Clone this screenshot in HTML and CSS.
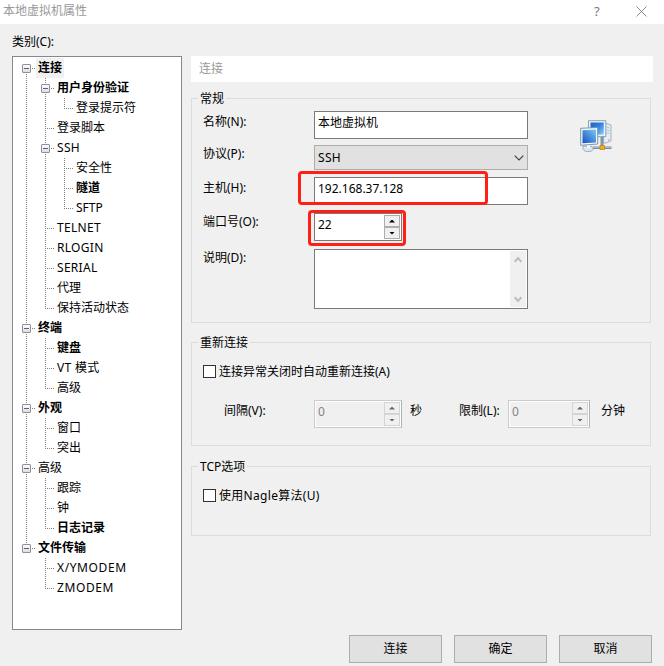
FILE: index.html
```html
<!DOCTYPE html>
<html lang="zh-CN">
<head>
<meta charset="utf-8">
<title>本地虚拟机属性</title>
<link rel="stylesheet" href="styles.css">
</head>
<body>
<div class="dialog">
  <header class="titlebar">
    <span class="title">本地虚拟机属性</span>
    <span class="help">?</span>
    <svg class="close" width="11" height="11" viewBox="0 0 11 11"><path d="M.5 .5l10 10M10.5 .5l-10 10" stroke="#8c8c8c" fill="none"/></svg>
  </header>
  <div class="category">类别(C):</div>
  <main class="content">
    <nav class="tree">
      <ul>
        <li><div class="row"><i class="branch"><b class="toggle"></b></i><span class="bold selected">连接</span></div>
          <ul>
            <li><div class="row"><i class="branch"><b class="toggle"></b></i><span class="bold">用户身份验证</span></div>
              <ul>
                <li><div class="row"><i class="branch"></i><span>登录提示符</span></div></li>
              </ul>
            </li>
            <li><div class="row"><i class="branch"></i><span>登录脚本</span></div></li>
            <li><div class="row"><i class="branch"><b class="toggle"></b></i><span class="latin">SSH</span></div>
              <ul>
                <li><div class="row"><i class="branch"></i><span>安全性</span></div></li>
                <li><div class="row"><i class="branch"></i><span class="bold">隧道</span></div></li>
                <li><div class="row"><i class="branch"></i><span>SFTP</span></div></li>
              </ul>
            </li>
            <li><div class="row"><i class="branch"></i><span class="latin">TELNET</span></div></li>
            <li><div class="row"><i class="branch"></i><span class="latin">RLOGIN</span></div></li>
            <li><div class="row"><i class="branch"></i><span class="latin">SERIAL</span></div></li>
            <li><div class="row"><i class="branch"></i><span>代理</span></div></li>
            <li><div class="row"><i class="branch"></i><span>保持活动状态</span></div></li>
          </ul>
        </li>
        <li><div class="row"><i class="branch"><b class="toggle"></b></i><span class="bold">终端</span></div>
          <ul>
            <li><div class="row"><i class="branch"></i><span class="bold">键盘</span></div></li>
            <li><div class="row"><i class="branch"></i><span class="latin">VT 模式</span></div></li>
            <li><div class="row"><i class="branch"></i><span>高级</span></div></li>
          </ul>
        </li>
        <li><div class="row"><i class="branch"><b class="toggle"></b></i><span class="bold">外观</span></div>
          <ul>
            <li><div class="row"><i class="branch"></i><span>窗口</span></div></li>
            <li><div class="row"><i class="branch"></i><span>突出</span></div></li>
          </ul>
        </li>
        <li><div class="row"><i class="branch"><b class="toggle"></b></i><span>高级</span></div>
          <ul>
            <li><div class="row"><i class="branch"></i><span>跟踪</span></div></li>
            <li><div class="row"><i class="branch"></i><span>钟</span></div></li>
            <li><div class="row"><i class="branch"></i><span class="bold">日志记录</span></div></li>
          </ul>
        </li>
        <li><div class="row"><i class="branch"><b class="toggle"></b></i><span class="bold">文件传输</span></div>
          <ul>
            <li><div class="row"><i class="branch"></i><span class="latin wide">X/YMODEM</span></div></li>
            <li><div class="row"><i class="branch"></i><span class="latin wide">ZMODEM</span></div></li>
          </ul>
        </li>
      </ul>
    </nav>
    <section class="panel">
      <h1 class="heading">连接</h1>
      <fieldset class="group general">
        <legend>常规</legend>
        <div class="general-body">
          <div class="fields">
            <div class="field name"><label>名称(N):</label><div class="control">本地虚拟机</div></div>
            <div class="field protocol"><label>协议(P):</label><div class="control select"><span class="latin">SSH</span>
              <svg width="10" height="6" viewBox="0 0 10 6"><path d="M.7 .7L5 5L9.3 .7" fill="none" stroke="#444" stroke-width="1.2"/></svg></div></div>
            <div class="field host"><label>主机(H):</label><div class="control">192.168.37.128</div><em class="mark"></em></div>
            <div class="field port"><label>端口号(O):</label>
              <div class="control spin"><span>22</span><div class="arrows"><i><b class="up"></b></i><i><b class="down"></b></i></div></div><em class="mark"></em></div>
            <div class="field note"><label>说明(D):</label><div class="control area">
              <div class="scroll">
                <svg width="8" height="7" viewBox="0 0 8 7"><path d="M.6 5.7L4 2L7.4 5.7" fill="none" stroke="#bdbdbd" stroke-width="2"/></svg>
                <svg width="8" height="7" viewBox="0 0 8 7"><path d="M.6 1.3L4 5L7.4 1.3" fill="none" stroke="#bdbdbd" stroke-width="2"/></svg>
              </div></div></div>
          </div>
          <svg class="network" width="32" height="33" viewBox="0 0 32 33">
            <defs>
              <linearGradient id="screen" x1="0" y1="0" x2="1" y2="1"><stop offset="0" stop-color="#1f5fc8"/><stop offset=".45" stop-color="#2f80dd"/><stop offset="1" stop-color="#8bd5fb"/></linearGradient>
              <linearGradient id="screen2" x1="0" y1="1" x2="1" y2="0"><stop offset="0" stop-color="#174fc0"/><stop offset="1" stop-color="#7acbf7"/></linearGradient>
            </defs>
            <path d="M25 3l6 2v16l-5 2h-3z" fill="#e3edf4" stroke="#8fa5b5" stroke-width=".8"/>
            <path d="M26.500 7l3 1M26.500 10l3 .5M26.500 13h3" stroke="#9eb4c4" stroke-width=".8"/>
            <path d="M28 20h1.500" stroke="#e87b67"/>
            <path d="M8.500 .7h17.300v15.800L8.500 17z" fill="#edf5fb" stroke="#7f97a8" stroke-width=".9"/>
            <path d="M10.500 2.500h13.300v12L10.500 15z" fill="url(#screen)"/>
            <path d="M20.500 17h3v9h-3z" fill="#7f96a9"/>
            <path d="M3 26c-1 4 2 6 6 5.500 4-.2 5-2 3-5z" fill="#dce6ed" stroke="#8ba1b0" stroke-width=".8"/>
            <path d="M7 25h3v3H7z" fill="#f8fafc"/>
            <path d="M.7 8.300l17-.8v16.500l-17 1.300z" fill="#f2f7fb" stroke="#748c9e" stroke-width=".9"/>
            <path d="M2.500 10.200l13.500-.6v12.800l-13.500 .9z" fill="url(#screen2)"/>
            <path d="M13 26.500h18.500v2.500H13z" fill="#758fa3"/><path d="M13 27.500h18.500" stroke="#b9cbd7" stroke-width=".7"/>
            <path d="M20 25.500h4.500v4H20z" fill="#faac13" stroke="#c47a18" stroke-width=".7"/>
          </svg>
        </div>
      </fieldset>
      <fieldset class="group reconnect">
        <legend>重新连接</legend>
        <label class="check"><i></i>连接异常关闭时自动重新连接(A)</label>
        <div class="timing">
          <label class="interval">间隔(V):</label>
          <div class="control spin disabled"><span>0</span><div class="arrows"><i><b class="up"></b></i><i><b class="down"></b></i></div></div>
          <label class="seconds">秒</label>
          <label class="limit">限制(L):</label>
          <div class="control spin disabled short"><span>0</span><div class="arrows"><i><b class="up"></b></i><i><b class="down"></b></i></div></div>
          <label class="minutes">分钟</label>
        </div>
      </fieldset>
      <fieldset class="group tcp">
        <legend>TCP选项</legend>
        <label class="check"><i></i><span class="latin">使用Nagle算法(U)</span></label>
      </fieldset>
    </section>
  </main>
  <footer class="buttons"><button>连接</button><button>确定</button><button>取消</button></footer>
</div>
</body>
</html>
```
FILE: styles.css
```css
* { box-sizing: border-box; }
body { margin: 0; background: #f0f0f0; color: #000; }
body, button { font: 12px/16px "Noto Sans", "Noto Sans CJK SC", sans-serif; }
.dialog { width: 664px; height: 666px; overflow: hidden; }
.titlebar { height: 24px; background: #fff; color: #999; display: flex; padding: 3px 17px 0 3px; }
.title { flex: 1; }
.help { font-size: 13px; width: 7px; margin-right: 35px; color: #777; }
.close { margin-top: 3px; }
.category { height: 32px; padding: 10px 12px 0; }
.content { display: flex; gap: 9px; padding-left: 12px; height: 574px; }

.tree { width: 170px; border: 1px solid #828790; background: #fff; padding: 1px 0 0 4px; }
.tree ul { list-style: none; margin: 0; padding: 0; }
.tree ul ul { padding-left: 19px; }
.tree li { background: repeating-linear-gradient(#808080 0 1px, transparent 1px 2px) 9px 0 / 1px 100% no-repeat; }
.tree li:last-child { background-size: 1px 11px; }
.tree > ul > li:first-child { background-position: 9px 10px; }
.row { display: flex; height: 20px; line-height: 20px; white-space: nowrap; }
.row span { padding: 0 2px; }
.latin { letter-spacing: .3px; }
.wide { letter-spacing: .6px; }
.branch { width: 19px; padding: 6px 0 0 5px; background: repeating-linear-gradient(90deg, #808080 0 1px, transparent 1px 2px) 9px 10px / 10px 1px no-repeat; }
.toggle { display: block; width: 9px; height: 9px; border: 1px solid #919191; border-radius: 1px; background: linear-gradient(#4b63a7, #4b63a7) 1px 3px / 5px 1px no-repeat, linear-gradient(#fff, #ddd); box-shadow: 0 0 0 1px #fff; }
.bold { font-weight: 700; }
.selected { background: #f0f0f0; }

.panel { width: 462px; }
.heading { height: 26px; margin: 0 0 8px; background: #fff; color: #999; font: inherit; padding: 5px 8px; }
.group { width: 460px; margin: 0; padding: 0; min-width: 0; border: 1px solid #dcdcdc; }
.group legend { height: 17px; line-height: 17px; margin-left: 6px; padding: 0 2px; }
.general { height: 233px; margin-bottom: 11px; }
.reconnect { height: 112px; margin-bottom: 12px; }
.tcp { height: 78px; }
.general-body { display: flex; padding: 4px 0 0 11px; }
.fields { width: 325px; }
.field { display: flex; position: relative; }
.field > label { width: 111px; padding-top: 3px; }
.control { width: 214px; height: 28px; border: 1px solid #7a7a7a; background: #fff; padding: 3px; }
.protocol { margin: 6px 0 7px; }
.protocol > label, .port > label, .note > label { padding-top: 1px; }
.select { height: 25px; background: #e1e1e1; border-color: #adadad; display: flex; justify-content: space-between; padding-top: 4px; }
.select svg { margin-top: 5px; }
.port, .note { margin-top: 8px; }
.spin { width: 88px; display: flex; justify-content: space-between; padding: 1px; }
.spin span { padding: 2px; }
.arrows { width: 16px; height: 24px; display: grid; grid-template-rows: 12px 12px; background: #f0f0f0; }
.arrows i { border: 1px solid #adadad; display: grid; place-items: center; }
.up, .down { width: 6px; height: 3px; background: #000; clip-path: polygon(50% 0, 100% 100%, 0 100%); }
.down { clip-path: polygon(0 0, 100% 0, 50% 100%); }
.mark { position: absolute; border: 3px solid #ff2015; border-radius: 4px; }
.host .mark { left: 95px; top: -6px; width: 190px; height: 34px; }
.port .mark { left: 105px; top: -3px; width: 98px; height: 36px; }
.area { height: 60px; padding: 1px; display: flex; justify-content: flex-end; }
.scroll { width: 16px; background: #f0f0f0; display: flex; flex-direction: column; justify-content: space-between; align-items: center; padding: 5px 0 4px; }
.network { margin: 9px 0 0 52px; }

.check { display: flex; gap: 3px; }
.check i { width: 13px; height: 13px; border: 1px solid #333; background: #fff; margin-top: 1px; }
.reconnect .check { padding: 13px 0 0 11px; }
.tcp .check { padding: 13px 0 0 11px; }
.timing { display: flex; padding: 20px 0 0 32px; }
.timing label { padding-top: 3px; }
.interval { width: 90px; }
.seconds { width: 57px; padding-left: 8px; }
.limit { width: 49px; }
.minutes { padding-left: 11px; }
.disabled { background: #f0f0f0; color: #838383; border-color: #ccc #adb2b5 #ccc #ccc; box-shadow: inset 0 0 0 1px #fff; }
.short { width: 82px; }
.disabled .arrows i { border-color: #d4d4d4; }
.disabled .up, .disabled .down { background: #666; }
.buttons { display: flex; gap: 12px; justify-content: flex-end; padding: 5px 12px 0 0; }
.buttons button { width: 93px; height: 28px; border: 1px solid #adadad; background: #e1e1e1; padding: 0 0 1px; color: #000; }
```
